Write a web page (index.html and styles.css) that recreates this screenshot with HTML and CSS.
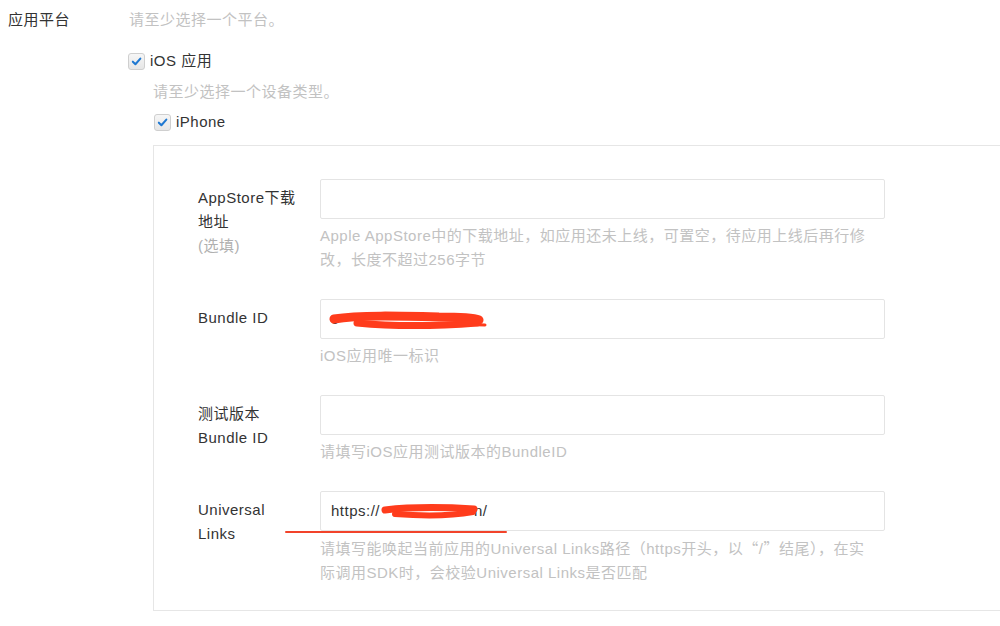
FILE: index.html
```html
<!DOCTYPE html>
<html lang="zh-CN">
<head>
<meta charset="utf-8">
<title>应用平台</title>
<link rel="stylesheet" href="styles.css">
</head>
<body>
<div class="form">
  <div class="field">
    <div class="field-label">应用平台</div>
    <div class="field-body">
      <div class="hint">请至少选择一个平台。</div>
      <label class="check check-platform">
        <span class="check-box"><svg viewBox="0 0 12 12" width="11" height="11"><path d="M2 6.2 L4.8 9 L10.2 2.8" fill="none" stroke="#1f78d1" stroke-width="2.2" stroke-linecap="round" stroke-linejoin="round"/></svg></span>
        <span>iOS 应用</span>
      </label>
      <div class="device">
        <div class="hint">请至少选择一个设备类型。</div>
        <label class="check check-device">
          <span class="check-box"><svg viewBox="0 0 12 12" width="11" height="11"><path d="M2 6.2 L4.8 9 L10.2 2.8" fill="none" stroke="#1f78d1" stroke-width="2.2" stroke-linecap="round" stroke-linejoin="round"/></svg></span>
          <span>iPhone</span>
        </label>
        <div class="panel">
          <div class="row">
            <div class="row-label">AppStore下载地址<div class="optional">(选填)</div></div>
            <div class="row-control">
              <div class="input"></div>
              <div class="help">Apple AppStore中的下载地址，如应用还未上线，可置空，待应用上线后再行修改，长度不超过256字节</div>
            </div>
          </div>
          <div class="row">
            <div class="row-label">Bundle ID</div>
            <div class="row-control">
              <div class="input">c<span class="masked masked-bundle"></span>
                <svg class="redact redact-bundle" viewBox="0 0 160 20" width="160" height="20"><path d="M5 8 C30 4 70 5 110 6 C130 6 145 7 150 9" fill="none" stroke="#ff3c1c" stroke-width="9" stroke-linecap="round"/><path d="M28 12 C70 16 110 15 148 12" fill="none" stroke="#ff3c1c" stroke-width="7" stroke-linecap="round"/><path d="M120 13 L156 14" stroke="#ff3c1c" stroke-width="3" stroke-linecap="round"/></svg>
              </div>
              <div class="help">iOS应用唯一标识</div>
            </div>
          </div>
          <div class="row">
            <div class="row-label">测试版本 Bundle ID</div>
            <div class="row-control">
              <div class="input"></div>
              <div class="help">请填写iOS应用测试版本的BundleID</div>
            </div>
          </div>
          <div class="row">
            <div class="row-label">Universal Links</div>
            <div class="row-control">
              <div class="input">https://<span class="masked masked-link"></span>n/
                <svg class="redact redact-link" viewBox="0 0 100 18" width="100" height="18"><path d="M4 7 C30 4 60 4 93 6" fill="none" stroke="#ff3c1c" stroke-width="7" stroke-linecap="round"/><path d="M14 11 C40 13 70 13 92 9" fill="none" stroke="#ff3c1c" stroke-width="6" stroke-linecap="round"/></svg>
              </div>
              <div class="help">请填写能唤起当前应用的Universal Links路径（https开头，以<span class="cjk">“</span>/<span class="cjk">”</span>结尾），在实际调用SDK时，会校验Universal Links是否匹配</div>
            </div>
            <span class="underline-mark"></span>
          </div>
        </div>
      </div>
    </div>
  </div>
</div>
</body>
</html>
```
FILE: styles.css
```css
html, body {
  margin: 0;
  overflow: hidden;
  background: #fff;
}
body {
  font-family: "Liberation Sans", "Noto Sans CJK SC", sans-serif;
  font-size: 15px;
  line-height: 24px;
  letter-spacing: 0.5px;
  color: #333;
}
.form {
  padding: 8px 0 0 8px;
}
.field {
  display: flex;
}
.field-label {
  width: 121px;
  flex: none;
}
.field-body {
  flex: none;
}
.hint {
  color: #c2c2c2;
}
.check {
  display: flex;
  align-items: center;
  gap: 5px;
  height: 24px;
}
.check-platform {
  margin-top: 17px;
  margin-left: -1px;
}
.check-box {
  width: 15px;
  height: 15px;
  border: 1px solid #cfcfcf;
  border-radius: 3px;
  background: linear-gradient(#f6f6f6, #e6e6e6);
  display: flex;
  align-items: center;
  justify-content: center;
}
.device {
  margin-left: 24px;
  margin-top: 7px;
}
.check-device {
  margin-top: 6px;
  margin-left: 1px;
}
.panel {
  margin-top: 11px;
  width: 848px;
  box-sizing: border-box;
  border: 1px solid #e6e6e6;
  padding: 33px 0 25px 44px;
  display: flex;
  flex-direction: column;
  gap: 27px;
}
.row {
  display: flex;
  position: relative;
}
.row-label {
  width: 122px;
  padding: 7px 22px 0 0;
  box-sizing: border-box;
  flex: none;
}
.optional {
  color: #b0b0b0;
}
.row-control {
  width: 565px;
  flex: none;
}
.input {
  height: 40px;
  box-sizing: border-box;
  border: 1px solid #e4e4e4;
  border-radius: 2px;
  padding: 0 10px;
  display: flex;
  align-items: center;
  position: relative;
  color: #333;
  white-space: nowrap;
}
.masked {
  display: inline-block;
  height: 16px;
}
.masked-bundle {
  width: 140px;
}
.masked-link {
  width: 94px;
}
.help {
  margin-top: 5px;
  width: 552px;
  color: #c2c2c2;
}
.cjk {
  font-family: "Noto Sans CJK SC", sans-serif;
}
.redact {
  position: absolute;
}
.redact-bundle {
  left: 8px;
  top: 11px;
}
.redact-link {
  left: 60px;
  top: 11px;
}
.underline-mark {
  position: absolute;
  left: 87px;
  top: 40px;
  width: 222px;
  height: 2px;
  background: #f2432a;
  border-radius: 1px;
}
```
